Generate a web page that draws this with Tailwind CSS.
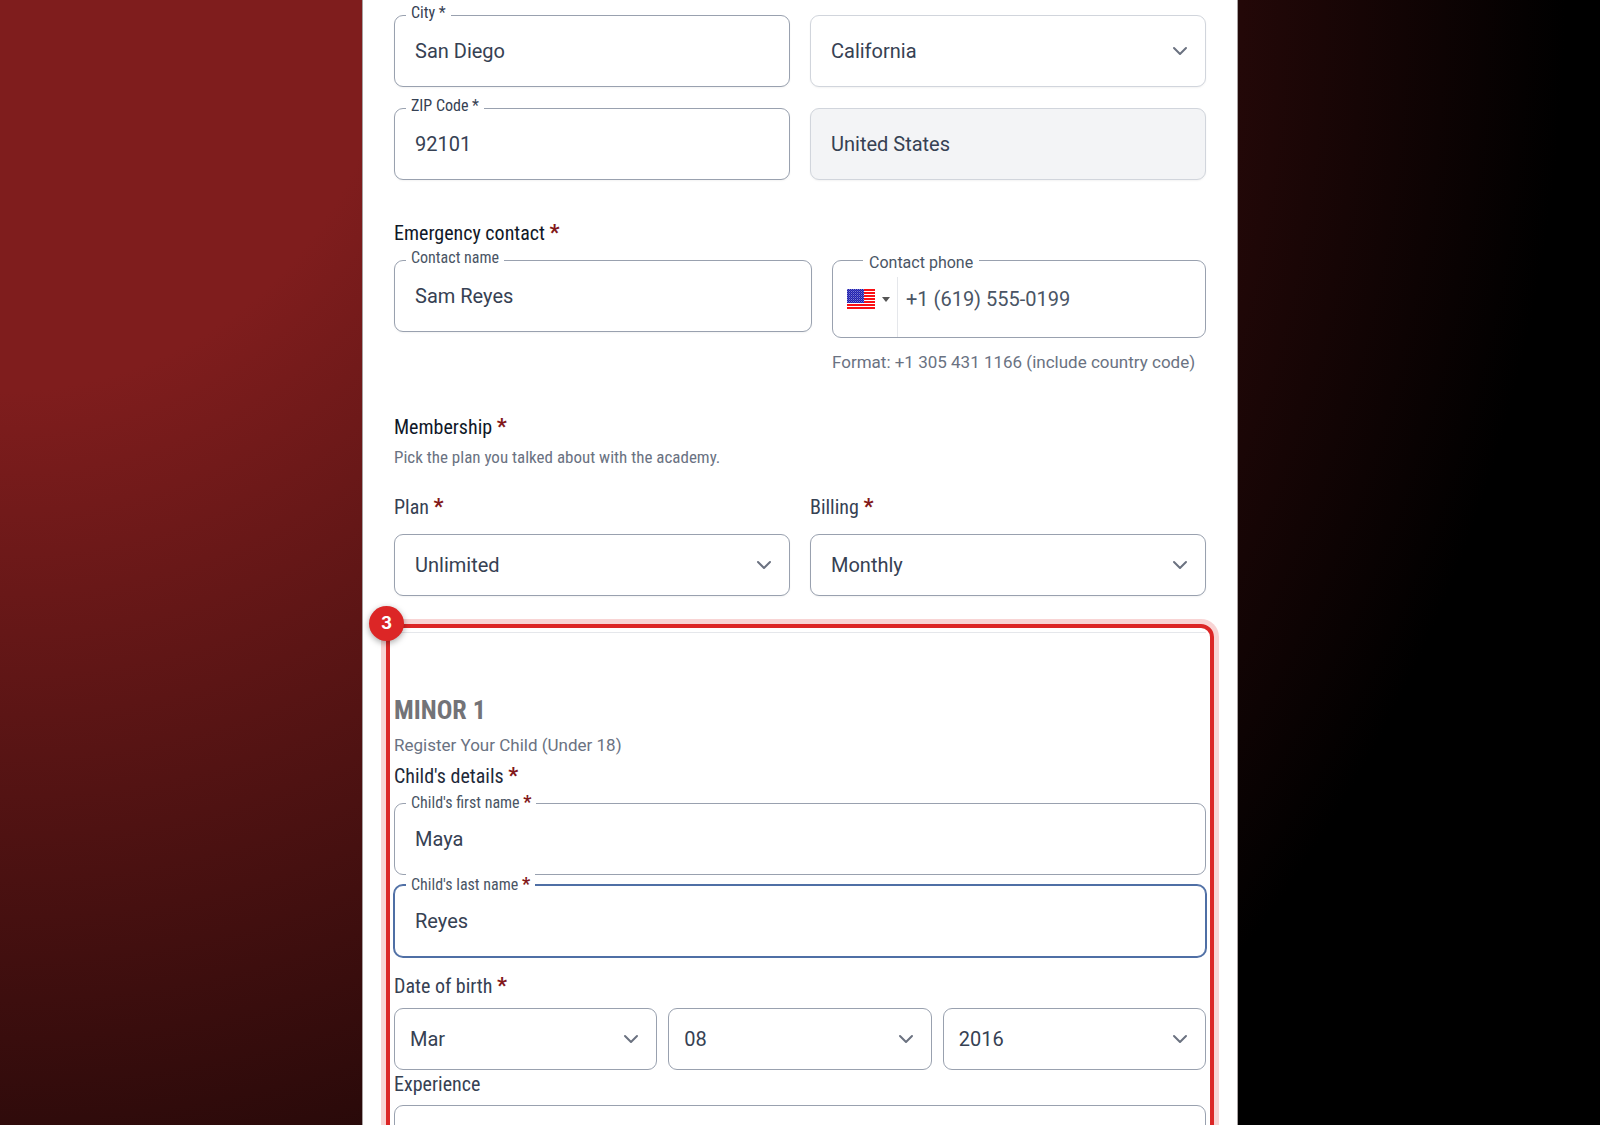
<!DOCTYPE html>
<html lang="en">
<head>
<meta charset="utf-8">
<meta name="viewport" content="width=device-width, initial-scale=1">
<title>Academy registration</title>
<script src="https://cdn.jsdelivr.net/npm/@tailwindcss/browser@4"></script>
</head>
<body class="h-screen overflow-hidden bg-[radial-gradient(circle_at_0_0,#7f1d1d_20%,#000_80%)] font-['Roboto',sans-serif] text-gray-700">
<main class="mx-auto min-h-screen w-full max-w-[876px] border-x border-[#a8a2a2] bg-white px-[31px] pt-[15px]">
<form>
  <div class="grid grid-cols-2 gap-x-5 gap-y-[21px]">
    <div class="relative">
      <input id="city" value="San Diego" class="block h-[72px] w-full rounded-[9px] border border-gray-400 bg-white px-5 text-[20px] shadow-xs">
      <label for="city" class="absolute -top-[11px] left-3 bg-white px-[5px] font-['Roboto_Condensed','Roboto',sans-serif] text-[16px] leading-[18px] text-gray-700">City *</label>
    </div>
    <div class="grid items-center">
      <select aria-label="State" class="col-start-1 row-start-1 h-[72px] w-full appearance-none rounded-[9px] border border-gray-300 bg-white px-5 text-[20px] shadow-xs"><option>California</option></select>
      <svg class="pointer-events-none col-start-1 row-start-1 mr-[18px] size-4 justify-self-end" viewBox="0 0 16 16" fill="none" stroke="#6b7280" stroke-width="2" stroke-linecap="round" stroke-linejoin="round"><path d="M2 5l6 6 6-6"/></svg>
    </div>
    <div class="relative">
      <input id="zip" value="92101" class="block h-[72px] w-full rounded-[9px] border border-gray-400 bg-white px-5 text-[20px] shadow-xs">
      <label for="zip" class="absolute -top-[11px] left-3 bg-white px-[5px] font-['Roboto_Condensed','Roboto',sans-serif] text-[16px] leading-[18px] text-gray-700">ZIP Code *</label>
    </div>
    <input aria-label="Country" value="United States" readonly class="block h-[72px] w-full rounded-[9px] border border-gray-300 bg-gray-100 px-5 text-[20px] shadow-xs">
  </div>

  <h2 class="mt-[39px] font-['Roboto_Condensed','Roboto',sans-serif] text-[20px] leading-7 text-gray-900">Emergency contact <span class="font-['Roboto',sans-serif] text-[22px] leading-none font-bold text-red-900">*</span></h2>
  <div class="mt-[13px] grid grid-cols-[minmax(0,1fr)_374px] items-start gap-x-5">
    <div class="relative">
      <input id="cname" value="Sam Reyes" class="block h-[72px] w-full rounded-[9px] border border-gray-400 bg-white px-5 text-[20px] shadow-xs">
      <label for="cname" class="absolute -top-[11px] left-3 bg-white px-[5px] font-['Roboto_Condensed','Roboto',sans-serif] text-[16px] leading-[18px] text-gray-600">Contact name</label>
    </div>
    <div>
      <div class="relative flex h-[78px] rounded-[9px] border border-gray-400 bg-white">
        <button type="button" aria-label="Country code" class="mt-4 flex w-[65px] items-center gap-[7px] border-r border-gray-200 pb-4 pl-[14px]">
          <svg class="h-5 w-7" viewBox="0 0 28 20">
            <defs><pattern id="stars" width="2" height="2" patternUnits="userSpaceOnUse"><rect width="2" height="2" fill="#1f1fb0"/><rect width="1" height="1" fill="#7d7dd0"/><rect x="1" y="1" width="1" height="1" fill="#4a4ac0"/></pattern></defs>
            <rect width="28" height="20" fill="#fff"/>
            <path d="M0 1h28M0 4h28M0 7h28M0 10h28M0 13h28M0 16h28M0 19h28" stroke="#fa0f14" stroke-width="2"/>
            <rect width="17" height="14" fill="url(#stars)"/>
          </svg>
          <svg class="h-[5px] w-2" viewBox="0 0 8 5"><path d="M0 0h8L4 5z" fill="#555"/></svg>
        </button>
        <input id="cphone" type="tel" value="+1 (619) 555-0199" class="min-w-0 flex-1 rounded-r-[9px] bg-transparent pr-4 pl-2 text-[20px] text-gray-600 outline-none">
        <label for="cphone" class="absolute -top-[10px] left-[30px] bg-white px-[6px] text-[16px] leading-6 text-gray-600">Contact phone</label>
      </div>
      <p class="mt-3 text-[17px] leading-6 whitespace-nowrap text-gray-500">Format: +1 305 431 1166 (include country code)</p>
    </div>
  </div>

  <h2 class="mt-[39px] font-['Roboto_Condensed','Roboto',sans-serif] text-[20px] leading-7 text-gray-900">Membership <span class="font-['Roboto',sans-serif] text-[22px] leading-none font-bold text-red-900">*</span></h2>
  <p class="mt-1 font-['Roboto_Condensed','Roboto',sans-serif] text-[17px] leading-6 text-gray-500">Pick the plan you talked about with the academy.</p>
  <div class="mt-6 grid grid-cols-2 gap-x-5">
    <div>
      <label for="plan" class="block font-['Roboto_Condensed','Roboto',sans-serif] text-[20px] leading-7">Plan <span class="font-['Roboto',sans-serif] text-[22px] leading-none font-bold text-red-900">*</span></label>
      <div class="mt-[13px] grid items-center">
        <select id="plan" class="col-start-1 row-start-1 h-[62px] w-full appearance-none rounded-[9px] border border-gray-400 bg-white px-5 text-[20px] shadow-xs"><option>Unlimited</option></select>
        <svg class="pointer-events-none col-start-1 row-start-1 mr-[18px] size-4 justify-self-end" viewBox="0 0 16 16" fill="none" stroke="#6b7280" stroke-width="2" stroke-linecap="round" stroke-linejoin="round"><path d="M2 5l6 6 6-6"/></svg>
      </div>
    </div>
    <div>
      <label for="billing" class="block font-['Roboto_Condensed','Roboto',sans-serif] text-[20px] leading-7">Billing <span class="font-['Roboto',sans-serif] text-[22px] leading-none font-bold text-red-900">*</span></label>
      <div class="mt-[13px] grid items-center">
        <select id="billing" class="col-start-1 row-start-1 h-[62px] w-full appearance-none rounded-[9px] border border-gray-400 bg-white px-5 text-[20px] shadow-xs"><option>Monthly</option></select>
        <svg class="pointer-events-none col-start-1 row-start-1 mr-[18px] size-4 justify-self-end" viewBox="0 0 16 16" fill="none" stroke="#6b7280" stroke-width="2" stroke-linecap="round" stroke-linejoin="round"><path d="M2 5l6 6 6-6"/></svg>
      </div>
    </div>
  </div>

  <section class="relative mt-9 border-t border-gray-200 pt-[59px] pb-12">
    <div class="pointer-events-none absolute -inset-x-2 -top-[9px] bottom-0 rounded-[13px] border-4 border-[#dc2626] shadow-[0_0_0_5px_rgba(220,38,38,0.2)]"></div>
    <div class="absolute -top-[27px] -left-[25px] grid size-[35px] place-items-center rounded-full bg-[#dc2626] font-['Inter',sans-serif] text-[17px] leading-none font-bold text-white shadow-[0_2px_6px_rgba(0,0,0,0.35)]">3</div>
    <h2 class="font-['Roboto_Condensed','Roboto',sans-serif] text-[26px] leading-9 font-bold text-[#737377]">MINOR 1</h2>
    <p class="mt-[5px] text-[17px] leading-6 text-gray-500">Register Your Child (Under 18)</p>
    <h3 class="mt-[5px] font-['Roboto_Condensed','Roboto',sans-serif] text-[20px] leading-7 text-gray-800">Child's details <span class="font-['Roboto',sans-serif] text-[22px] leading-none font-bold text-red-900">*</span></h3>
    <div class="mt-[13px] grid gap-[10px]">
      <div class="relative">
        <input id="first" value="Maya" class="block h-[72px] w-full rounded-[9px] border border-gray-400 bg-white px-5 text-[20px]">
        <label for="first" class="absolute -top-3 left-3 bg-white px-[5px] font-['Roboto_Condensed','Roboto',sans-serif] text-[16px] leading-6 text-gray-600">Child's first name <span class="text-[18px] leading-none font-bold text-red-900">*</span></label>
      </div>
      <div class="relative">
        <input id="last" value="Reyes" class="block h-[72px] w-full rounded-[9px] border border-[#4f6fa5] bg-white px-5 text-[20px] ring ring-[#4f6fa5] outline-none">
        <label for="last" class="absolute -top-3 left-3 bg-white px-[5px] font-['Roboto_Condensed','Roboto',sans-serif] text-[16px] leading-6 text-gray-600">Child's last name <span class="text-[18px] leading-none font-bold text-red-900">*</span></label>
      </div>
    </div>
    <fieldset class="mt-[15px]">
      <legend class="font-['Roboto_Condensed','Roboto',sans-serif] text-[20px] leading-7">Date of birth <span class="font-['Roboto',sans-serif] text-[22px] leading-none font-bold text-red-900">*</span></legend>
      <div class="mt-2 grid grid-cols-3 gap-[11px]">
        <div class="grid items-center">
          <select aria-label="Month" class="col-start-1 row-start-1 h-[62px] w-full appearance-none rounded-[9px] border border-gray-400 bg-white px-[15px] text-[20px]"><option>Mar</option></select>
          <svg class="pointer-events-none col-start-1 row-start-1 mr-[18px] size-4 justify-self-end" viewBox="0 0 16 16" fill="none" stroke="#6b7280" stroke-width="2" stroke-linecap="round" stroke-linejoin="round"><path d="M2 5l6 6 6-6"/></svg>
        </div>
        <div class="grid items-center">
          <select aria-label="Day" class="col-start-1 row-start-1 h-[62px] w-full appearance-none rounded-[9px] border border-gray-400 bg-white px-[15px] text-[20px]"><option>08</option></select>
          <svg class="pointer-events-none col-start-1 row-start-1 mr-[18px] size-4 justify-self-end" viewBox="0 0 16 16" fill="none" stroke="#6b7280" stroke-width="2" stroke-linecap="round" stroke-linejoin="round"><path d="M2 5l6 6 6-6"/></svg>
        </div>
        <div class="grid items-center">
          <select aria-label="Year" class="col-start-1 row-start-1 h-[62px] w-full appearance-none rounded-[9px] border border-gray-400 bg-white px-[15px] text-[20px]"><option>2016</option></select>
          <svg class="pointer-events-none col-start-1 row-start-1 mr-[18px] size-4 justify-self-end" viewBox="0 0 16 16" fill="none" stroke="#6b7280" stroke-width="2" stroke-linecap="round" stroke-linejoin="round"><path d="M2 5l6 6 6-6"/></svg>
        </div>
      </div>
    </fieldset>
    <label for="experience" class="block font-['Roboto_Condensed','Roboto',sans-serif] text-[20px] leading-7">Experience</label>
    <input id="experience" class="mt-[7px] block h-[72px] w-full rounded-[9px] border border-gray-400 bg-white px-5 text-[20px]">
  </section>
</form>
</main>
</body>
</html>
